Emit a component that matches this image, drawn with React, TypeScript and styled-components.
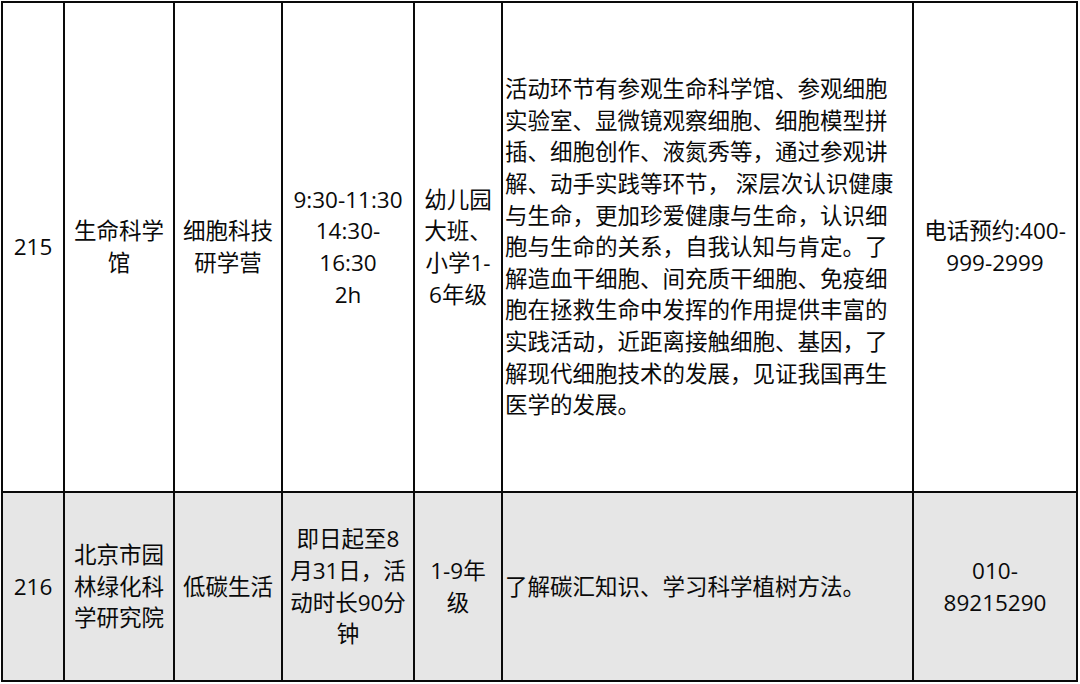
import React from 'react';
import styled, { createGlobalStyle } from 'styled-components';

const GlobalStyle = createGlobalStyle`
  body {
    margin: 0;
    background: #fff;
  }
`;

const Page = styled.div`
  padding: 1px 0 0 1px;
`;

const Grid = styled.div`
  display: grid;
  grid-template-columns: 60px 108px 106px 130px 86px 409px 162px;
  grid-template-rows: 488px 187px;
  gap: 2px;
  padding: 2px;
  width: fit-content;
  background: #0a0a0a;
  font-family: "Open Sans", "Noto Sans CJK SC", sans-serif;
  font-size: 22.5px;
  line-height: 31.6px;
  color: #0a0a0a;
`;

const Cell = styled.div<{ $shade?: boolean; $left?: boolean }>`
  display: flex;
  align-items: center;
  justify-content: ${(p) => (p.$left ? 'flex-start' : 'center')};
  text-align: ${(p) => (p.$left ? 'left' : 'center')};
  padding: ${(p) => (p.$left ? '0 2px' : '0')};
  background: ${(p) => (p.$shade ? '#e6e6e6' : '#ffffff')};
  white-space: nowrap;
`;

type Row = {
  id: string;
  place: string[];
  name: string[];
  time: string[];
  grade: string[];
  desc: string[];
  contact: string[];
};

const rows: Row[] = [
  {
    id: '215',
    place: ['生命科学', '馆'],
    name: ['细胞科技', '研学营'],
    time: ['9:30-11:30', '14:30-', '16:30', '2h'],
    grade: ['幼儿园', '大班、', '小学1-', '6年级'],
    desc: [
      '活动环节有参观生命科学馆、参观细胞',
      '实验室、显微镜观察细胞、细胞模型拼',
      '插、细胞创作、液氮秀等，通过参观讲',
      '解、动手实践等环节， 深层次认识健康',
      '与生命，更加珍爱健康与生命，认识细',
      '胞与生命的关系，自我认知与肯定。了',
      '解造血干细胞、间充质干细胞、免疫细',
      '胞在拯救生命中发挥的作用提供丰富的',
      '实践活动，近距离接触细胞、基因，了',
      '解现代细胞技术的发展，见证我国再生',
      '医学的发展。',
    ],
    contact: ['电话预约:400-', '999-2999'],
  },
  {
    id: '216',
    place: ['北京市园', '林绿化科', '学研究院'],
    name: ['低碳生活'],
    time: ['即日起至8', '月31日，活', '动时长90分', '钟'],
    grade: ['1-9年', '级'],
    desc: ['了解碳汇知识、学习科学植树方法。'],
    contact: ['010-', '89215290'],
  },
];

const Lines = ({ items }: { items: string[] }) => (
  <div>
    {items.map((t, i) => (
      <div key={i}>{t}</div>
    ))}
  </div>
);

const App = () => {
  return (
    <Page>
      <GlobalStyle />
      <Grid>
        {rows.map((r, i) => {
          const shade = i % 2 === 1;
          return (
            <React.Fragment key={r.id}>
              <Cell $shade={shade}>{r.id}</Cell>
              <Cell $shade={shade}><Lines items={r.place} /></Cell>
              <Cell $shade={shade}><Lines items={r.name} /></Cell>
              <Cell $shade={shade}><Lines items={r.time} /></Cell>
              <Cell $shade={shade}><Lines items={r.grade} /></Cell>
              <Cell $shade={shade} $left><Lines items={r.desc} /></Cell>
              <Cell $shade={shade}><Lines items={r.contact} /></Cell>
            </React.Fragment>
          );
        })}
      </Grid>
    </Page>
  );
};

export default App;
